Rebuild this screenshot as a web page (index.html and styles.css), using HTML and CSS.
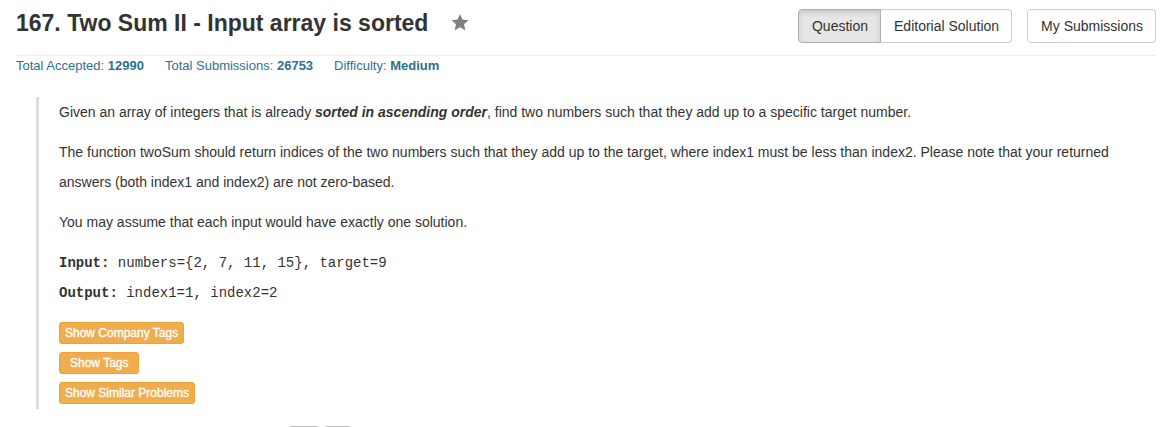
FILE: index.html
```html
<!DOCTYPE html>
<html lang="en">
<head>
<meta charset="utf-8">
<title>167. Two Sum II - Input array is sorted</title>
<link rel="stylesheet" href="styles.css">
</head>
<body>
<main class="page">
  <header class="header">
    <h1 class="title">167. Two Sum II - Input array is sorted</h1>
    <button class="favorite" type="button" aria-label="Add to favorites">
      <svg viewBox="0 0 18 17" width="18" height="17" aria-hidden="true"><path d="M9 0L11.5 5.6L17.6 6.2L13 10.3L14.4 16.5L9 13.3L3.6 16.5L5 10.3L.4 6.2L6.5 5.6Z" fill="#808080"/></svg>
    </button>
    <nav class="actions">
      <div class="group">
        <button class="btn btn-active" type="button">Question</button>
        <button class="btn" type="button">Editorial Solution</button>
      </div>
      <button class="btn" type="button">My Submissions</button>
    </nav>
  </header>
  <div class="stats">
    <span>Total Accepted: <strong>12990</strong></span>
    <span>Total Submissions: <strong>26753</strong></span>
    <span>Difficulty: <strong>Medium</strong></span>
  </div>
  <section class="question">
    <p>Given an array of integers that is already <strong><em>sorted in ascending order</em></strong>, find two numbers such that they add up to a specific target number.</p>
    <p>The function twoSum should return indices of the two numbers such that they add up to the target, where index1 must be less than index2. Please note that your returned answers (both index1 and index2) are not zero-based.</p>
    <p>You may assume that each input would have exactly one solution.</p>
    <p class="sample"><b>Input:</b> numbers={2, 7, 11, 15}, target=9<br><b>Output:</b> index1=1, index2=2</p>
    <div class="tags">
      <button class="tag" type="button">Show Company Tags</button>
      <button class="tag tag-wide" type="button">Show Tags</button>
      <button class="tag" type="button">Show Similar Problems</button>
    </div>
  </section>
  <div class="share">
    <button class="share-btn share-btn-wide" type="button" aria-label="Share"></button>
    <button class="share-btn" type="button" aria-label="Follow"></button>
  </div>
</main>
</body>
</html>
```
FILE: styles.css
```css
* {
  box-sizing: border-box;
}

body {
  margin: 0;
  height: 100vh;
  overflow: hidden;
  background: #fff;
  color: #333;
  font: 14px/20px "Liberation Sans", Arial, sans-serif;
}

button {
  font-family: inherit;
  cursor: pointer;
}

.page {
  padding: 9px 17px 0 16px;
}

.header {
  display: flex;
  align-items: flex-start;
  padding-bottom: 12px;
  border-bottom: 1px solid #eee;
}

.title {
  margin: 0;
  font-size: 23px;
  font-weight: 700;
  line-height: 28px;
}

.favorite {
  display: flex;
  margin: 5px 0 0 23px;
  padding: 0;
  border: 0;
  background: none;
}

.actions {
  display: flex;
  gap: 15px;
  margin-left: auto;
}

.group {
  display: flex;
}

.btn {
  height: 34px;
  padding: 0 12px 0 13px;
  border: 1px solid #ccc;
  border-radius: 4px;
  background: #fff;
  color: #333;
  font-size: 14px;
  white-space: nowrap;
}

.group .btn:first-child {
  border-radius: 4px 0 0 4px;
}

.group .btn:last-child {
  border-left: 0;
  border-radius: 0 4px 4px 0;
}

.btn-active {
  border-color: #adadad;
  background: #e6e6e6;
  box-shadow: inset 0 3px 5px rgba(0, 0, 0, 0.125);
}

.stats {
  display: flex;
  gap: 21px;
  color: #31708f;
  font-size: 13px;
}

.question {
  margin: 21px 0 0 20px;
  padding: 0 20px 5px;
  border-left: 3px solid #ddd;
  line-height: 30px;
}

.question p {
  margin: 0 0 10px;
}

.question .sample {
  padding-top: 1px;
  font-family: "Liberation Mono", "Courier New", monospace;
}

.tags {
  display: flex;
  flex-direction: column;
  align-items: flex-start;
  gap: 8px;
  padding-top: 4px;
}

.tag {
  height: 22px;
  padding: 0 5px;
  border: 1px solid #eea236;
  border-radius: 3px;
  background: #f0ad4e;
  color: #fff;
  font-size: 12px;
  -webkit-text-stroke: 0.3px #fff;
}

.tag-wide {
  padding: 0 10px;
}

.share {
  display: flex;
  gap: 5px;
  margin: 17px 0 0 272px;
}

.share-btn {
  width: 27px;
  height: 20px;
  padding: 0;
  border: 1px solid #bbb;
  border-radius: 3px;
  background: #fff;
}

.share-btn-wide {
  width: 31px;
}
```
